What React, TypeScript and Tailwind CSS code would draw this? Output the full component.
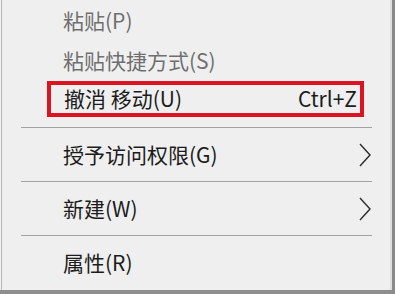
const font = { fontFamily: '"Noto Sans CJK SC", "Noto Sans", sans-serif' }

function Chevron() {
  return (
    <svg width="12" height="24" viewBox="0 0 12 24" className="mr-[19px]">
      <polyline points="1,1 11,12 1,23" fill="none" stroke="#2a2a2a" strokeWidth="1.4" />
    </svg>
  )
}

function Sep() {
  return <div className="ml-[19px] mr-[18px] h-px bg-[#a3a3a3]" />
}

export default function App() {
  return (
    <div className="w-[395px] h-[294px] bg-[#f3f3f3] pl-[1px] border-r-[3px] border-r-[#8a8a8a] border-b-4 border-b-[#8e8e8e]" style={font}>
      <div className="h-full bg-[#efefef] border-l border-l-[#b5b5b5] border-r-2 border-r-[#dedede] flex flex-col text-[21px] text-[#1c1c1c]">
        <div className="h-[41px] flex items-center pl-[61px] text-[#6f6f6f]">粘贴(P)</div>
        <div className="h-[40px] flex items-center pl-[61px] text-[#6f6f6f]">粘贴快捷方式(S)</div>
        <div className="h-[36px] ml-[45px] w-[317px] border-4 border-[#dc1422] flex items-center justify-between pl-[13px] pr-[3px]">
          <span>撤消 移动(U)</span>
          <span>Ctrl+Z</span>
        </div>
        <div className="h-[10px]" />
        <Sep />
        <div className="h-[53px] flex items-center justify-between pl-[61px]">
          <span>授予访问权限(G)</span>
          <Chevron />
        </div>
        <Sep />
        <div className="h-[53px] flex items-center justify-between pl-[61px]">
          <span>新建(W)</span>
          <Chevron />
        </div>
        <Sep />
        <div className="flex-1 flex items-center pl-[61px]">属性(R)</div>
      </div>
    </div>
  )
}
